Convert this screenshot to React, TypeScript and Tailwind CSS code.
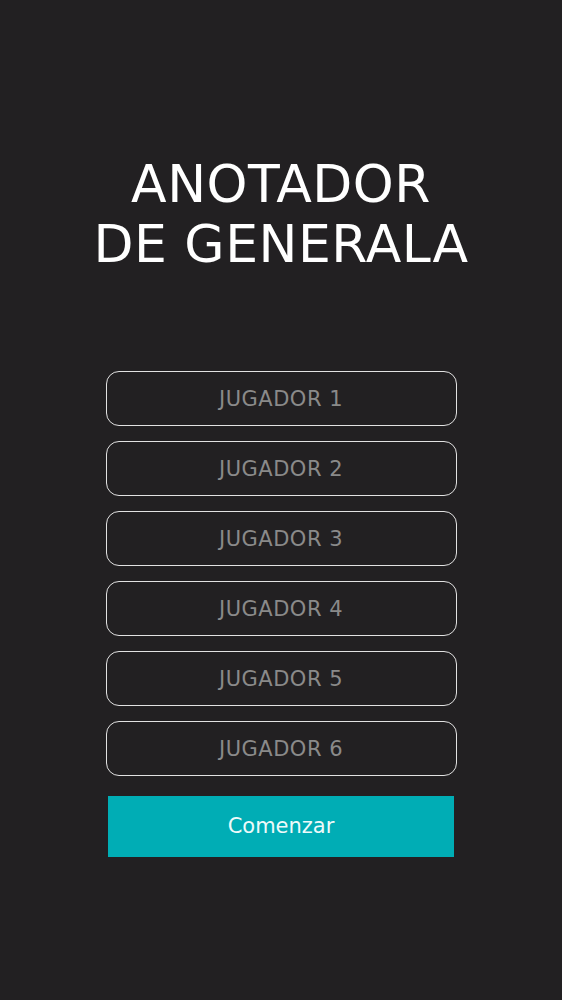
import React from "react";

const players = [1, 2, 3, 4, 5, 6];

const App = () => {
  return (
    <main
      className="min-h-[1000px] w-full bg-[#222022] flex flex-col items-center"
      style={{ fontFamily: '"DejaVu Sans", "Open Sans", sans-serif' }}
    >
      <h1 className="mt-[154px] text-center text-white text-[52px] leading-[60px] font-normal tracking-[0.5px]">
        ANOTADOR
        <br />
        DE GENERALA
      </h1>
      <div className="mt-[97px] flex flex-col gap-[15px]">
        {players.map((n) => (
          <input
            key={n}
            placeholder={`JUGADOR ${n}`}
            className="w-[351px] h-[55px] rounded-[13px] border-[1.5px] border-[#e2e2e2] bg-transparent text-center text-[21px] tracking-[0.5px] text-white placeholder:text-[#8a8a8a] outline-none"
          />
        ))}
      </div>
      <button className="mt-[20px] w-[346px] h-[61px] bg-[#00adb5] text-[#eefafa] text-[21px]">
        Comenzar
      </button>
    </main>
  );
};

export default App;
